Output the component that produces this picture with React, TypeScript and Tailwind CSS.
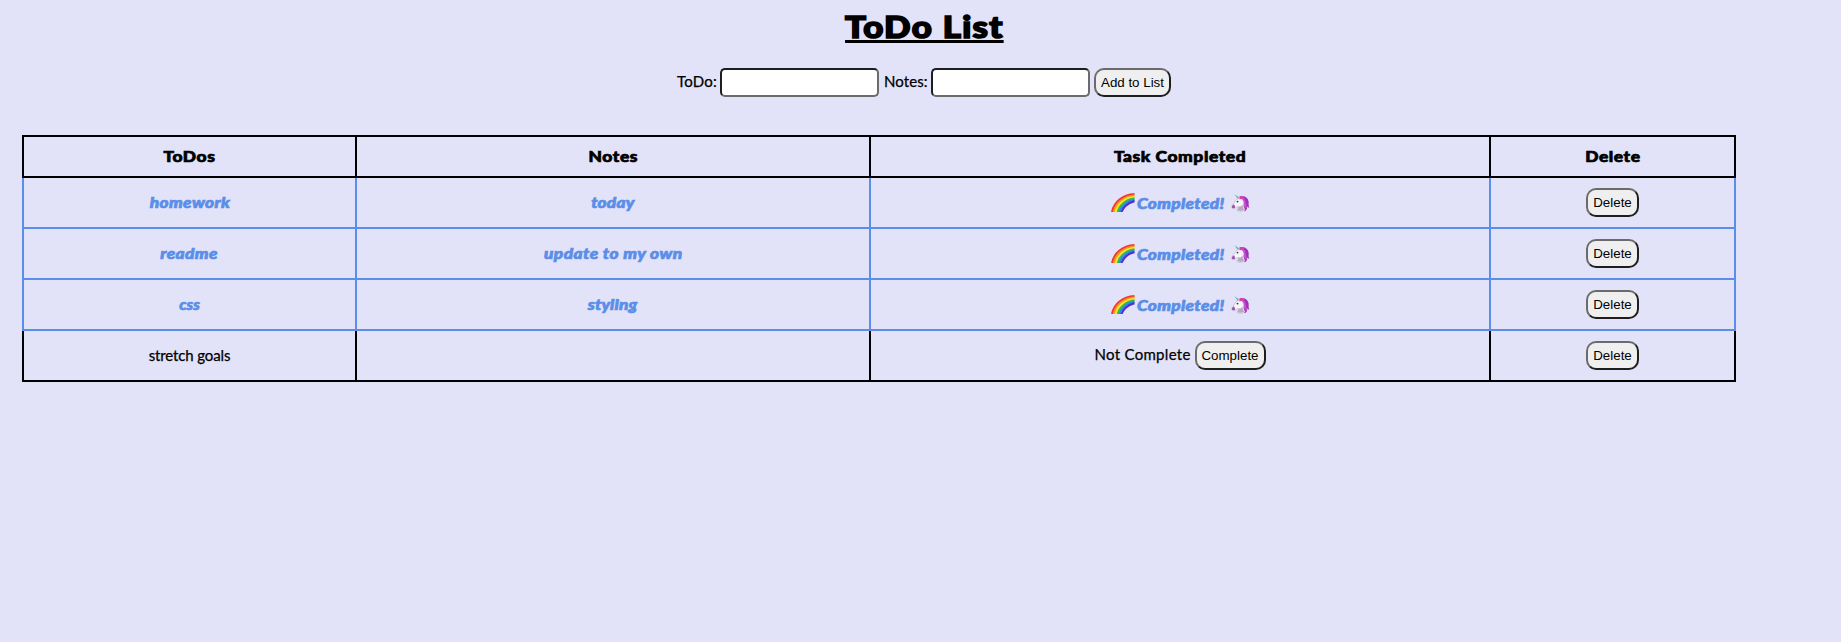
import React, { useState } from "react";

type Todo = { id: number; todo: string; notes: string; done: boolean; spacing: string[] };

const TODOS: Todo[] = [
  { id: 1, todo: "homework", notes: "today", done: true, spacing: ["scale-x-115 tracking-[0.33px]", "scale-x-115 tracking-[0.16px]"] },
  { id: 2, todo: "readme", notes: "update to my own", done: true, spacing: ["scale-x-115 tracking-[0.36px]", "scale-x-115 tracking-[0.42px]"] },
  { id: 3, todo: "css", notes: "styling", done: true, spacing: ["scale-x-107", "scale-x-115 tracking-[0.1px]"] },
  { id: 4, todo: "stretch goals", notes: "", done: false, spacing: ["tracking-[-0.12px] [-webkit-text-stroke:0.25px_#000]", ""] },
];

const RAINBOW = ["#f5352b", "#fb931c", "#fbe62b", "#35bd45", "#2488f0", "#5a2bc9"];

function Rainbow() {
  return (
    <svg className="h-[19px] w-[24px] shrink-0" viewBox="0 0 24 19" fill="none">
      {RAINBOW.map((color, i) => (
        <path
          key={color}
          d={`M${1 + i * 1.9} 19C${3 + i * 1.7} ${9.2 + i * 1.3} ${11.5 + i * 0.8} ${1.8 + i * 1.6} 23.5 ${1.1 + i * 1.4}`}
          stroke={color}
          strokeWidth="2.1"
        />
      ))}
    </svg>
  );
}

function Unicorn() {
  return (
    <svg className="h-[18px] w-[19px] shrink-0" viewBox="0 0 19 18">
      <path d="M8 3.2C12 .8 17 3 17.6 7.5c.3 2.6-.5 4 .8 6.3-1.3-.2-1.8-.7-2.2-1.2.2 2-.6 3.6-2.2 4.6l-3-3.4 1-7z" fill="#a030b8" />
      <path d="M10 3.2c2.8.3 4.6 2.4 4.7 5.2.1 2.4 1.5 3.6 1.2 6.2-2.5-1-3.7-3.4-3.6-6z" fill="#c850d2" />
      <path
        d="M7.2 4.3 9 2.8l.8 1.7c2.4 1.2 3.4 3.4 2.9 5.7-.3 1.8.2 3.7 1.4 5.2-1.7 2.2-6.4 2.6-8.3.7.9-1.3 1.8-2.2 1.8-3.6-1.7.3-2.6.8-3.7 1.7-1.1.9-2.8.4-3.1-1-.2-1.2.7-1.9 1.6-3.1 1.3-1.7 1.6-4.1 4.8-5.8z"
        fill="#f6f4f8"
        stroke="#a79bb8"
        strokeWidth=".45"
      />
      <path d="M7.6 12.5c2 .2 3.2-.9 3.9-2.3.2 2.6.6 4 1.9 5.3-1.7 1.4-5.4 1.7-7.2.5.8-1 1.4-2 1.4-3.5z" fill="#b4abc0" />
      <path d="M.8 12.7c.3-1.2 1-1.7 1.7-2.3 1 .2 1.7 1.4 1.6 3.1-1.1 1.4-3 1.1-3.3-.8z" fill="#9a55b0" />
      <path d="M6.7 4.8 3.4.3l5 3.2z" fill="#45c4bb" />
      <path d="m7.1 4.4 1.1-2.3 1.5 2.5-1.5.8z" fill="#ed9bd7" />
      <path d="M8.7 2.3c2.4-.8 4.4.3 5 1.8-2-.3-3.3.5-4.9 1.4z" fill="#d63fae" />
      <circle cx="6.5" cy="7.6" r=".9" fill="#3b2a45" />
    </svg>
  );
}

function Button({ children, className }: { children: React.ReactNode; className: string }) {
  return (
    <button
      className={`flex h-[29px] shrink-0 items-center justify-center whitespace-nowrap rounded-[10px] border-2 border-t-[#6b6b6b] border-r-[#1e1e1e] border-b-[#1e1e1e] border-l-[#6b6b6b] bg-[#efefef] font-['Liberation_Sans',Arial,sans-serif] text-[13.33px] leading-none text-black [-webkit-text-stroke:0px] ${className}`}
    >
      {children}
    </button>
  );
}

function Field({ label, className, gap }: { label: string; className: string; gap: string }) {
  return (
    <label className={`flex items-center ${gap}`}>
      <span className={`mb-[3px] whitespace-nowrap text-[15px] leading-[20px] [-webkit-text-stroke:0.25px_#000] ${className}`}>
        {label}
      </span>
      <input className="h-[29px] w-[159px] rounded-[5px] border-2 border-t-[#1e1e1e] border-r-[#6b6b6b] border-b-[#6b6b6b] border-l-[#1e1e1e] bg-white px-1 outline-none" />
    </label>
  );
}

export default function App() {
  const [todos] = useState(TODOS);
  return (
    <div className="h-[642px] w-full overflow-hidden bg-[#e2e2f8] font-[Lato,'Gill_Sans',sans-serif] text-black">
      <header className="flex h-[68px] w-[1849px] justify-center pt-[6px]">
        <h1 className="h-[40px] scale-x-116 whitespace-nowrap text-[30px] leading-[40px] font-black tracking-[1.13px] underline decoration-[3px] underline-offset-[2px] [-webkit-text-stroke:1.6px_#000]">
          ToDo List
        </h1>
      </header>
      <form className="ml-[677px] flex h-[29px] items-center" onSubmit={(e) => e.preventDefault()}>
        <Field label="ToDo:" className="w-[41px] tracking-[0.25px]" gap="gap-[2px]" />
        <div className="w-[5px]" />
        <Field label="Notes:" className="w-[44px] tracking-[0.1px]" gap="gap-[3px]" />
        <div className="w-[4px]" />
        <Button className="w-[77px]">Add to List</Button>
      </form>
      <table className="mt-[38px] ml-[22px] w-[1714px] table-fixed border-collapse text-center text-[15px] leading-[20px]">
        <colgroup>
          <col className="w-[333px]" />
          <col className="w-[514px]" />
          <col className="w-[620px]" />
          <col className="w-[245px]" />
        </colgroup>
        <thead>
          <tr className="h-[41px]">
            {["ToDos", "Notes", "Task Completed", "Delete"].map((h) => (
              <th key={h} className="border-2 border-black p-0 pb-[2px] font-black">
                <span className="inline-block scale-x-116 tracking-[0.5px] [-webkit-text-stroke:0.7px_#000]">{h}</span>
              </th>
            ))}
          </tr>
        </thead>
        <tbody>
          {todos.map((t) => {
            const cell = t.done
              ? "border-2 border-[#5a8ee8] p-0 font-black italic text-[#5a8ee8] [-webkit-text-stroke:0.7px_#5a8ee8]"
              : "border-2 border-black p-0";
            return (
              <tr key={t.id} className="h-[51px]">
                <td className={`${cell} pb-[2px]`}>
                  <span className={`inline-block ${t.spacing[0]}`}>{t.todo}</span>
                </td>
                <td className={`${cell} pb-[2px]`}>
                  <span className={`inline-block ${t.spacing[1]}`}>{t.notes}</span>
                </td>
                <td className={cell}>
                  {t.done ? (
                    <div className="flex items-center justify-center">
                      <Rainbow />
                      <span className="ml-[2px] w-[94px] text-left">
                        <span className="inline-block origin-left scale-x-115 tracking-[0.32px]">Completed!</span>
                      </span>
                      <Unicorn />
                    </div>
                  ) : (
                    <div className="flex items-center justify-center">
                      <span className="mb-[3px] w-[100px] whitespace-nowrap text-left tracking-[0.3px] [-webkit-text-stroke:0.25px_#000]">
                        Not Complete
                      </span>
                      <Button className="w-[71px]">Complete</Button>
                    </div>
                  )}
                </td>
                <td className={cell}>
                  <div className="flex justify-center font-normal not-italic">
                    <Button className="w-[53px]">Delete</Button>
                  </div>
                </td>
              </tr>
            );
          })}
        </tbody>
      </table>
    </div>
  );
}
